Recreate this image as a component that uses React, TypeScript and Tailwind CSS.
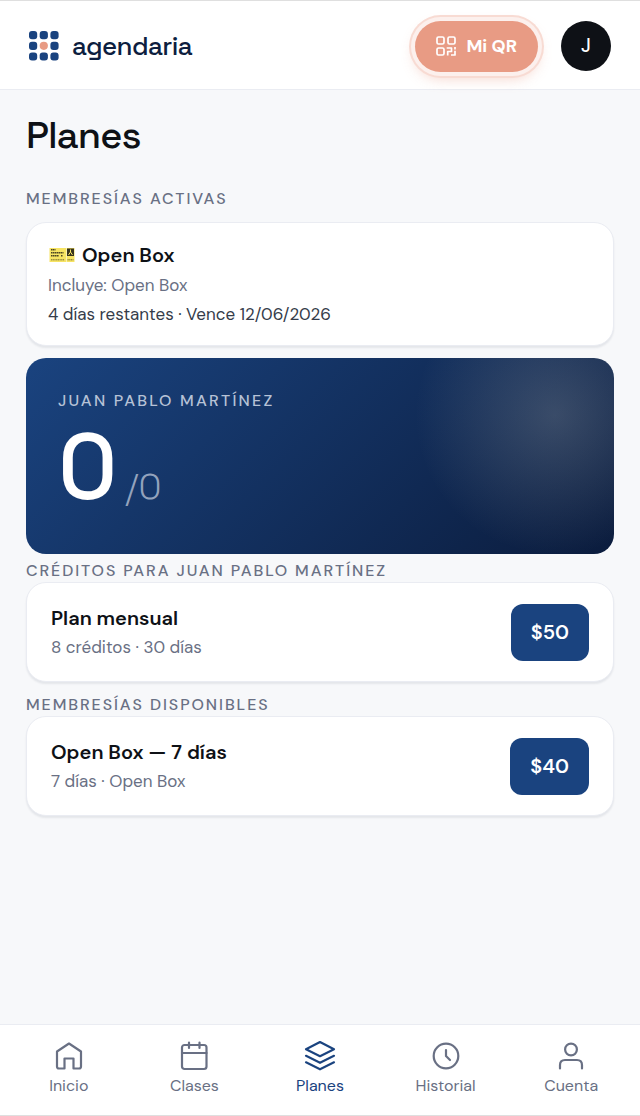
import type { ReactNode } from 'react'

const BRAND = '#1a437f'

function Logo() {
  const dots = [1, 11.7, 22.4]
  return (
    <svg viewBox="0 0 32 32" className="size-8" aria-hidden="true">
      {dots.map((y, row) =>
        dots.map((x, col) => {
          const center = row === 1 && col === 1
          return (
            <rect key={`${row}-${col}`} x={x} y={y} width={8.2} height={8.2} rx={center ? 4.1 : 3} fill={center ? '#e89b84' : BRAND} />
          )
        }),
      )}
    </svg>
  )
}

function QrIcon() {
  return (
    <svg viewBox="0 0 20 20" className="size-5" fill="none" stroke="currentColor" strokeWidth={1.7} strokeLinejoin="round" aria-hidden="true">
      <rect x="1" y="1" width="7" height="7" rx="1.5" />
      <rect x="12" y="1" width="7" height="7" rx="1.5" />
      <rect x="1" y="12" width="7" height="7" rx="1.5" />
      <path d="M10.700 12h4.800v3.500h-3.800v4M19 11v2.500M19 14.800v4.200h-4" />
    </svg>
  )
}

function Ticket() {
  return (
    <svg viewBox="0 0 28 16" className="h-4 w-7" aria-hidden="true">
      <rect x="1.5" y="1" width="16.5" height="14" fill="#f7e463" />
      <rect x="18.5" y="1" width="8" height="14" fill="#f7e463" />
      <g stroke="#4d4722" strokeWidth="1.4">
        <path d="M3 2.800h4.500M3 5.800h12.500M3 8.800h8M13 8.800h1.500" strokeDasharray="1.600 .4" />
        <path d="M3 12.800h13.500M19.500 12.800h6" strokeWidth=".8" strokeDasharray="1.200 .5" />
      </g>
      <rect x="19" y="1.5" width="7" height="7.5" fill="#37331d" />
      <path d="M22.500 2.500v2.500l-2 3M22.500 5l2 3" stroke="#f7e463" strokeWidth="1" fill="none" />
    </svg>
  )
}

function Card({ className, children }: { className: string; children: ReactNode }) {
  return (
    <div className={`rounded-[20px] border border-[#eaecf2] bg-white shadow-[0_2px_2px_rgba(15,25,50,0.08)] ${className}`}>
      {children}
    </div>
  )
}

function SectionTitle({ children }: { children: ReactNode }) {
  return <h2 className="text-base leading-[22px] font-medium tracking-[0.12em] text-[#697084] uppercase">{children}</h2>
}

function PlanCard({ name, detail, price }: { name: string; detail: string; price: string }) {
  return (
    <Card className="flex items-center justify-between px-6 py-5">
      <div>
        <h3 className="text-xl leading-[30px] font-semibold text-[#0e1116]">{name}</h3>
        <p className="text-[17px] leading-7 text-[#697084]">{detail}</p>
      </div>
      <button type="button" className="h-[57px] rounded-xl bg-[#1a437f] px-5 text-xl font-semibold text-white">
        {price}
      </button>
    </Card>
  )
}

const tabs = [
  { label: 'Inicio', icon: <path d="M16 3.500 4 11.500v15q0 2 2 2h5.500V18.500h9v10h5.500q2 0 2-2v-15Z" /> },
  {
    label: 'Clases',
    icon: (
      <>
        <rect x="4" y="5" width="24.500" height="24" rx="2.500" />
        <path d="M4 13h24.500M11 2.500v5.500M21.500 2.500v5.500" />
      </>
    ),
  },
  { label: 'Planes', active: true, icon: <path d="M16 2 2 9.200l14 7 14-7ZM2 15.800l14 7 14-7M2 22.300l14 7 14-7" /> },
  {
    label: 'Historial',
    icon: (
      <>
        <circle cx="16" cy="16" r="12.300" />
        <path d="M16 10v6l4 4" />
      </>
    ),
  },
  {
    label: 'Cuenta',
    icon: (
      <>
        <circle cx="16" cy="9.500" r="5.900" />
        <path d="M5 28.500v-3.500q0-5 5-5h12q5 0 5 5v3.500" />
      </>
    ),
  },
]

export default function App() {
  return (
    <div className="flex min-h-screen flex-col bg-[#f7f8fa] font-['DM_Sans',Inter,sans-serif]">
      <header className="flex h-[90px] items-center justify-between border-t border-b border-t-[#dfdfdf] border-b-[#eaecf2] bg-white pt-0.5 pr-[29px] pl-7">
        <a href="#" className="flex items-center gap-3">
          <Logo />
          <span className="font-['Space_Grotesk',Inter,sans-serif] text-[26px] font-medium tracking-tight text-[#0d1e3f]">agendaria</span>
        </a>
        <div className="flex items-center gap-[23px]">
          <button
            type="button"
            className="flex h-[51px] items-center gap-2.5 rounded-full bg-[#e89b84] px-[21px] text-lg font-bold text-white shadow-[0_0_0_4px_#fcf0ed,0_0_0_6px_#f8dbd3,0_6px_14px_rgba(232,155,132,0.45)]"
          >
            <QrIcon />
            Mi QR
          </button>
          <button type="button" className="size-[50px] rounded-full bg-[#0e1116] text-[19px] font-medium text-white">
            J
          </button>
        </div>
      </header>

      <main className="flex-1 px-[26px] pt-5">
        <h1 className="font-['Space_Grotesk',Inter,sans-serif] text-[38px] leading-[50px] font-medium tracking-tight text-[#0e1116]">Planes</h1>

        <div className="mt-7">
          <SectionTitle>Membresías activas</SectionTitle>
        </div>
        <Card className="mt-3 px-[21px] py-4">
          <h3 className="flex items-center gap-1.5 text-xl leading-8 font-semibold text-[#0e1116]">
            <Ticket />
            Open Box
          </h3>
          <p className="text-[17px] leading-7 text-[#697084]">Incluye: Open Box</p>
          <p className="text-[17px] leading-[30px] text-[#353c4a]">4 días restantes · Vence 12/06/2026</p>
        </Card>

        <section className="mt-3 h-[196px] rounded-[20px] bg-[radial-gradient(circle_140px_at_90%_29%,rgba(210,210,200,0.22),transparent),linear-gradient(135deg,#1a437f,#0b1c3d)] px-8 pt-8">
          <p className="text-base leading-[22px] font-medium tracking-[0.14em] text-[#b6c2d6] uppercase">Juan Pablo Martínez</p>
          <p className="mt-2 flex items-baseline gap-2 font-['Space_Grotesk',Inter,sans-serif] leading-[94px] text-white">
            <span className="text-[92px] font-medium">0</span>
            <span className="text-4xl font-light text-[#93a3bd]">/0</span>
          </p>
        </section>

        <div className="mt-1.5">
          <SectionTitle>Créditos para Juan Pablo Martínez</SectionTitle>
        </div>
        <PlanCard name="Plan mensual" detail="8 créditos · 30 días" price="$50" />

        <div className="mt-3">
          <SectionTitle>Membresías disponibles</SectionTitle>
        </div>
        <PlanCard name="Open Box — 7 días" detail="7 días · Open Box" price="$40" />
      </main>

      <nav className="grid h-[92px] grid-cols-5 border-t border-b border-t-[#eaecf2] border-b-[#dfdfdf] bg-white px-1.5 pt-[15px]">
        {tabs.map((tab) => (
          <a
            key={tab.label}
            href="#"
            className={`flex flex-col items-center gap-0.5 text-base leading-6 ${tab.active ? 'text-[#1a437f]' : 'text-[#697084]'}`}
          >
            <svg
              viewBox="0 0 32 32"
              className="size-8"
              fill="none"
              stroke="currentColor"
              strokeWidth={2.2}
              strokeLinecap="round"
              strokeLinejoin="round"
              aria-hidden="true"
            >
              {tab.icon}
            </svg>
            {tab.label}
          </a>
        ))}
      </nav>
    </div>
  )
}
